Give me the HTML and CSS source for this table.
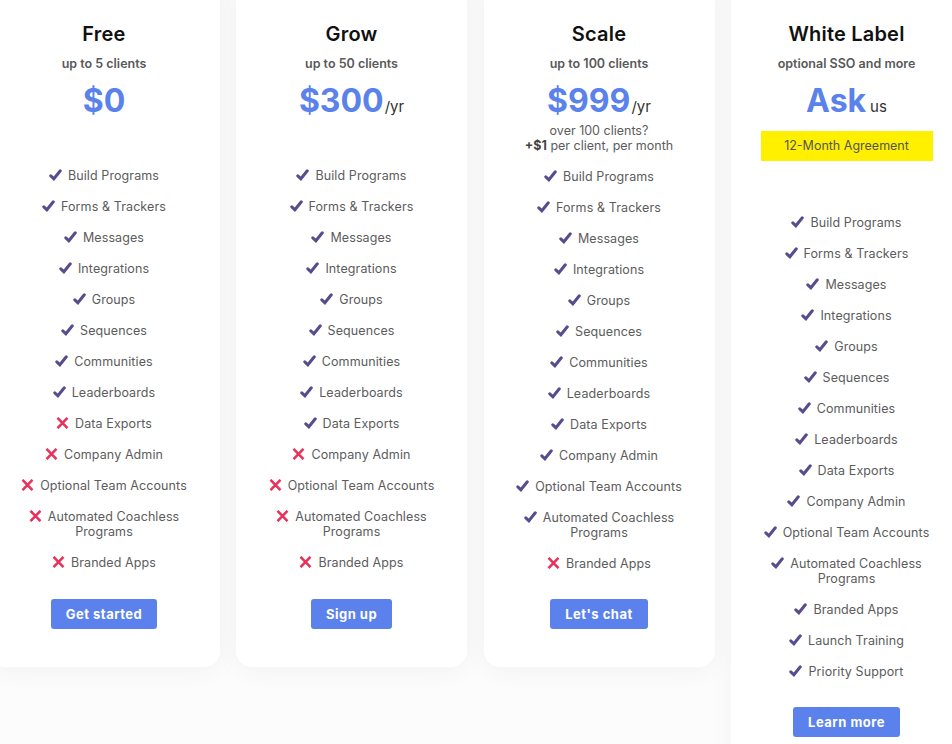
FILE: index.html
```html
<!DOCTYPE html>
<html lang="en">
<head>
<meta charset="utf-8">
<title>Pricing</title>
<link rel="stylesheet" href="styles.css">
</head>
<body>
<div class="plans">
  <div class="card">
    <h2 class="title">Free</h2>
    <p class="sub">up to 5 clients</p>
    <div class="price-area">
      <div class="price"><span class="amt">$0</span></div>
    </div>
    <ul class="features">
      <li><svg class="ic ok" viewBox="0 0 13 12"><path d="M1.8 6.8 L4.9 9.8 L11.3 1.8"/></svg>Build Programs</li>
      <li><svg class="ic ok" viewBox="0 0 13 12"><path d="M1.8 6.8 L4.9 9.8 L11.3 1.8"/></svg>Forms &amp; Trackers</li>
      <li><svg class="ic ok" viewBox="0 0 13 12"><path d="M1.8 6.8 L4.9 9.8 L11.3 1.8"/></svg>Messages</li>
      <li><svg class="ic ok" viewBox="0 0 13 12"><path d="M1.8 6.8 L4.9 9.8 L11.3 1.8"/></svg>Integrations</li>
      <li><svg class="ic ok" viewBox="0 0 13 12"><path d="M1.8 6.8 L4.9 9.8 L11.3 1.8"/></svg>Groups</li>
      <li><svg class="ic ok" viewBox="0 0 13 12"><path d="M1.8 6.8 L4.9 9.8 L11.3 1.8"/></svg>Sequences</li>
      <li><svg class="ic ok" viewBox="0 0 13 12"><path d="M1.8 6.8 L4.9 9.8 L11.3 1.8"/></svg>Communities</li>
      <li><svg class="ic ok" viewBox="0 0 13 12"><path d="M1.8 6.8 L4.9 9.8 L11.3 1.8"/></svg>Leaderboards</li>
      <li><svg class="ic no" viewBox="0 0 13 12"><path d="M1.5 0.8 L11.5 11.2 M11.5 0.8 L1.5 11.2"/></svg>Data Exports</li>
      <li><svg class="ic no" viewBox="0 0 13 12"><path d="M1.5 0.8 L11.5 11.2 M11.5 0.8 L1.5 11.2"/></svg>Company Admin</li>
      <li><svg class="ic no" viewBox="0 0 13 12"><path d="M1.5 0.8 L11.5 11.2 M11.5 0.8 L1.5 11.2"/></svg>Optional Team Accounts</li>
      <li><svg class="ic no" viewBox="0 0 13 12"><path d="M1.5 0.8 L11.5 11.2 M11.5 0.8 L1.5 11.2"/></svg>Automated Coachless Programs</li>
      <li><svg class="ic no" viewBox="0 0 13 12"><path d="M1.5 0.8 L11.5 11.2 M11.5 0.8 L1.5 11.2"/></svg>Branded Apps</li>
    </ul>
    <a class="btn" href="#">Get started</a>
  </div>

  <div class="card">
    <h2 class="title">Grow</h2>
    <p class="sub">up to 50 clients</p>
    <div class="price-area">
      <div class="price"><span class="amt">$300</span><span class="per">/yr</span></div>
    </div>
    <ul class="features">
      <li><svg class="ic ok" viewBox="0 0 13 12"><path d="M1.8 6.8 L4.9 9.8 L11.3 1.8"/></svg>Build Programs</li>
      <li><svg class="ic ok" viewBox="0 0 13 12"><path d="M1.8 6.8 L4.9 9.8 L11.3 1.8"/></svg>Forms &amp; Trackers</li>
      <li><svg class="ic ok" viewBox="0 0 13 12"><path d="M1.8 6.8 L4.9 9.8 L11.3 1.8"/></svg>Messages</li>
      <li><svg class="ic ok" viewBox="0 0 13 12"><path d="M1.8 6.8 L4.9 9.8 L11.3 1.8"/></svg>Integrations</li>
      <li><svg class="ic ok" viewBox="0 0 13 12"><path d="M1.8 6.8 L4.9 9.8 L11.3 1.8"/></svg>Groups</li>
      <li><svg class="ic ok" viewBox="0 0 13 12"><path d="M1.8 6.8 L4.9 9.8 L11.3 1.8"/></svg>Sequences</li>
      <li><svg class="ic ok" viewBox="0 0 13 12"><path d="M1.8 6.8 L4.9 9.8 L11.3 1.8"/></svg>Communities</li>
      <li><svg class="ic ok" viewBox="0 0 13 12"><path d="M1.8 6.8 L4.9 9.8 L11.3 1.8"/></svg>Leaderboards</li>
      <li><svg class="ic ok" viewBox="0 0 13 12"><path d="M1.8 6.8 L4.9 9.8 L11.3 1.8"/></svg>Data Exports</li>
      <li><svg class="ic no" viewBox="0 0 13 12"><path d="M1.5 0.8 L11.5 11.2 M11.5 0.8 L1.5 11.2"/></svg>Company Admin</li>
      <li><svg class="ic no" viewBox="0 0 13 12"><path d="M1.5 0.8 L11.5 11.2 M11.5 0.8 L1.5 11.2"/></svg>Optional Team Accounts</li>
      <li><svg class="ic no" viewBox="0 0 13 12"><path d="M1.5 0.8 L11.5 11.2 M11.5 0.8 L1.5 11.2"/></svg>Automated Coachless Programs</li>
      <li><svg class="ic no" viewBox="0 0 13 12"><path d="M1.5 0.8 L11.5 11.2 M11.5 0.8 L1.5 11.2"/></svg>Branded Apps</li>
    </ul>
    <a class="btn" href="#">Sign up</a>
  </div>

  <div class="card">
    <h2 class="title">Scale</h2>
    <p class="sub">up to 100 clients</p>
    <div class="price-area">
      <div class="price"><span class="amt">$999</span><span class="per">/yr</span></div>
      <p class="extra">over 100 clients?<br><b>+$1</b> per client, per month</p>
    </div>
    <ul class="features">
      <li><svg class="ic ok" viewBox="0 0 13 12"><path d="M1.8 6.8 L4.9 9.8 L11.3 1.8"/></svg>Build Programs</li>
      <li><svg class="ic ok" viewBox="0 0 13 12"><path d="M1.8 6.8 L4.9 9.8 L11.3 1.8"/></svg>Forms &amp; Trackers</li>
      <li><svg class="ic ok" viewBox="0 0 13 12"><path d="M1.8 6.8 L4.9 9.8 L11.3 1.8"/></svg>Messages</li>
      <li><svg class="ic ok" viewBox="0 0 13 12"><path d="M1.8 6.8 L4.9 9.8 L11.3 1.8"/></svg>Integrations</li>
      <li><svg class="ic ok" viewBox="0 0 13 12"><path d="M1.8 6.8 L4.9 9.8 L11.3 1.8"/></svg>Groups</li>
      <li><svg class="ic ok" viewBox="0 0 13 12"><path d="M1.8 6.8 L4.9 9.8 L11.3 1.8"/></svg>Sequences</li>
      <li><svg class="ic ok" viewBox="0 0 13 12"><path d="M1.8 6.8 L4.9 9.8 L11.3 1.8"/></svg>Communities</li>
      <li><svg class="ic ok" viewBox="0 0 13 12"><path d="M1.8 6.8 L4.9 9.8 L11.3 1.8"/></svg>Leaderboards</li>
      <li><svg class="ic ok" viewBox="0 0 13 12"><path d="M1.8 6.8 L4.9 9.8 L11.3 1.8"/></svg>Data Exports</li>
      <li><svg class="ic ok" viewBox="0 0 13 12"><path d="M1.8 6.8 L4.9 9.8 L11.3 1.8"/></svg>Company Admin</li>
      <li><svg class="ic ok" viewBox="0 0 13 12"><path d="M1.8 6.8 L4.9 9.8 L11.3 1.8"/></svg>Optional Team Accounts</li>
      <li><svg class="ic ok" viewBox="0 0 13 12"><path d="M1.8 6.8 L4.9 9.8 L11.3 1.8"/></svg>Automated Coachless Programs</li>
      <li><svg class="ic no" viewBox="0 0 13 12"><path d="M1.5 0.8 L11.5 11.2 M11.5 0.8 L1.5 11.2"/></svg>Branded Apps</li>
    </ul>
    <a class="btn" href="#">Let's chat</a>
  </div>

  <div class="card">
    <h2 class="title">White Label</h2>
    <p class="sub">optional SSO and more</p>
    <div class="price-area">
      <div class="price"><span class="amt">Ask</span><span class="per us">us</span></div>
      <div class="badge">12-Month Agreement</div>
    </div>
    <ul class="features">
      <li><svg class="ic ok" viewBox="0 0 13 12"><path d="M1.8 6.8 L4.9 9.8 L11.3 1.8"/></svg>Build Programs</li>
      <li><svg class="ic ok" viewBox="0 0 13 12"><path d="M1.8 6.8 L4.9 9.8 L11.3 1.8"/></svg>Forms &amp; Trackers</li>
      <li><svg class="ic ok" viewBox="0 0 13 12"><path d="M1.8 6.8 L4.9 9.8 L11.3 1.8"/></svg>Messages</li>
      <li><svg class="ic ok" viewBox="0 0 13 12"><path d="M1.8 6.8 L4.9 9.8 L11.3 1.8"/></svg>Integrations</li>
      <li><svg class="ic ok" viewBox="0 0 13 12"><path d="M1.8 6.8 L4.9 9.8 L11.3 1.8"/></svg>Groups</li>
      <li><svg class="ic ok" viewBox="0 0 13 12"><path d="M1.8 6.8 L4.9 9.8 L11.3 1.8"/></svg>Sequences</li>
      <li><svg class="ic ok" viewBox="0 0 13 12"><path d="M1.8 6.8 L4.9 9.8 L11.3 1.8"/></svg>Communities</li>
      <li><svg class="ic ok" viewBox="0 0 13 12"><path d="M1.8 6.8 L4.9 9.8 L11.3 1.8"/></svg>Leaderboards</li>
      <li><svg class="ic ok" viewBox="0 0 13 12"><path d="M1.8 6.8 L4.9 9.8 L11.3 1.8"/></svg>Data Exports</li>
      <li><svg class="ic ok" viewBox="0 0 13 12"><path d="M1.8 6.8 L4.9 9.8 L11.3 1.8"/></svg>Company Admin</li>
      <li><svg class="ic ok" viewBox="0 0 13 12"><path d="M1.8 6.8 L4.9 9.8 L11.3 1.8"/></svg>Optional Team Accounts</li>
      <li><svg class="ic ok" viewBox="0 0 13 12"><path d="M1.8 6.8 L4.9 9.8 L11.3 1.8"/></svg>Automated Coachless Programs</li>
      <li><svg class="ic ok" viewBox="0 0 13 12"><path d="M1.8 6.8 L4.9 9.8 L11.3 1.8"/></svg>Branded Apps</li>
      <li><svg class="ic ok" viewBox="0 0 13 12"><path d="M1.8 6.8 L4.9 9.8 L11.3 1.8"/></svg>Launch Training</li>
      <li><svg class="ic ok" viewBox="0 0 13 12"><path d="M1.8 6.8 L4.9 9.8 L11.3 1.8"/></svg>Priority Support</li>
    </ul>
    <a class="btn" href="#">Learn more</a>
  </div>
</div>
</body>
</html>
```

FILE: styles.css
```css
html, body {
  margin: 0;
  padding: 0;
  overflow: hidden;
  height: 100%;
}

body {
  background: #fcfcfc;
  font-family: Inter, "Noto Sans", "Liberation Sans", sans-serif;
  color: #555;
}

.plans {
  display: flex;
  align-items: flex-start;
  gap: 16.5px;
  margin-top: -30px;
  margin-left: -11.5px;
  width: 1000px;
}

.card {
  flex: 0 0 231px;
  width: 231px;
  box-sizing: border-box;
  background: #fff;
  border-radius: 16px;
  box-shadow: 0 4px 26px rgba(0, 0, 0, 0.045);
  padding: 52px 18px 38px;
  display: flex;
  flex-direction: column;
  align-items: center;
  text-align: center;
}

.title {
  margin: 0;
  font-size: 20px;
  line-height: 24px;
  font-weight: 600;
  color: #111;
  letter-spacing: 0.2px;
}

.sub {
  margin: 10px 0 0;
  font-size: 12.5px;
  line-height: 16px;
  font-weight: 600;
  color: #595959;
}

.price-area {
  margin-top: 9px;
  min-height: 71px;
  display: flex;
  flex-direction: column;
  align-items: center;
}

.price {
  line-height: 40px;
  height: 40px;
}

.amt {
  font-size: 32px;
  font-weight: 700;
  color: #5a82ea;
}

.per {
  font-size: 15px;
  color: #333;
  margin-left: 1px;
}

.per.us {
  margin-left: 4px;
}

.extra {
  margin: 1.5px 0 0;
  font-size: 12.5px;
  line-height: 15px;
  color: #5c5c5c;
}

.extra b {
  font-weight: 700;
  color: #444;
}

.badge {
  margin-top: 10px;
  margin-bottom: 37.5px;
  width: 172px;
  height: 30px;
  line-height: 30px;
  background: #fff000;
  font-size: 12.5px;
  color: #555;
}

.features {
  list-style: none;
  margin: 16px 0 0;
  padding: 0;
  width: 100%;
  display: flex;
  flex-direction: column;
  gap: 16px;
}

.features li {
  font-size: 12.5px;
  line-height: 15px;
  color: #5c5c5c;
  letter-spacing: 0.1px;
}

.ic {
  display: inline-block;
  width: 13px;
  height: 12px;
  margin-right: 6px;
  vertical-align: -1px;
  fill: none;
}

.ic.ok {
  stroke: #574c8c;
  stroke-width: 3;
  stroke-linecap: round;
  stroke-linejoin: miter;
}

.ic.no {
  stroke: #e8325b;
  stroke-width: 2.5;
  stroke-linecap: butt;
}

.btn {
  margin-top: 28.5px;
  display: inline-block;
  height: 30px;
  line-height: 30px;
  padding: 0 15px;
  background: #5b82ec;
  color: #fff;
  font-size: 13px;
  font-weight: 700;
  letter-spacing: 0.5px;
  text-decoration: none;
  border-radius: 3px;
}
```
